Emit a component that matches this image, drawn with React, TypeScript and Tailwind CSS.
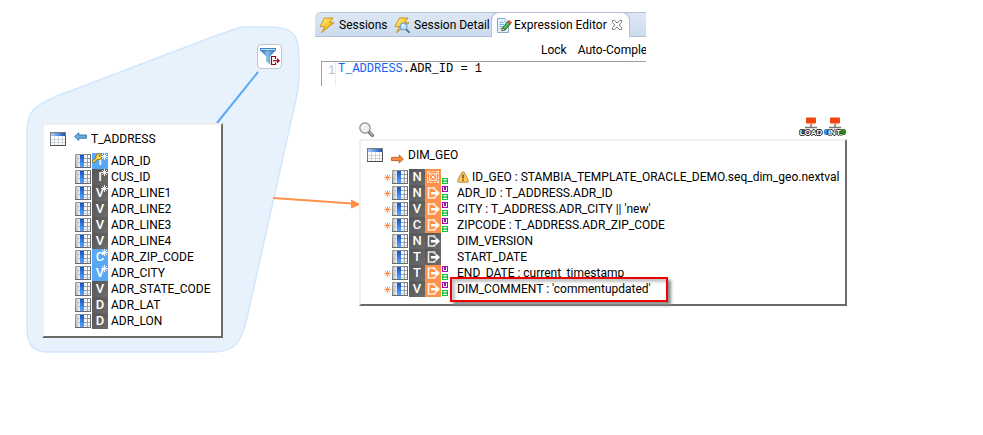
import type { ReactNode } from "react";
import { clsx } from "clsx";

type SourceColumn = {
  name: string;
  type: string;
  notNull?: boolean;
  primaryKey?: boolean;
  used?: boolean;
};

type TargetColumn = {
  label: string;
  type: string;
  mapped?: boolean;
  sequence?: boolean;
  warning?: boolean;
  marks?: string[];
  highlighted?: boolean;
};

const sourceColumns: SourceColumn[] = [
  { name: "ADR_ID", type: "I", notNull: true, primaryKey: true, used: true },
  { name: "CUS_ID", type: "I", notNull: true },
  { name: "ADR_LINE1", type: "V", notNull: true },
  { name: "ADR_LINE2", type: "V" },
  { name: "ADR_LINE3", type: "V" },
  { name: "ADR_LINE4", type: "V" },
  { name: "ADR_ZIP_CODE", type: "C", notNull: true, used: true },
  { name: "ADR_CITY", type: "V", notNull: true, used: true },
  { name: "ADR_STATE_CODE", type: "V" },
  { name: "ADR_LAT", type: "D" },
  { name: "ADR_LON", type: "D" },
];

const targetColumns: TargetColumn[] = [
  {
    label: "ID_GEO : STAMBIA_TEMPLATE_ORACLE_DEMO.seq_dim_geo.nextval",
    type: "N",
    mapped: true,
    sequence: true,
    warning: true,
    marks: ["I"],
  },
  { label: "ADR_ID : T_ADDRESS.ADR_ID", type: "N", mapped: true, marks: ["U", "I"] },
  { label: "CITY : T_ADDRESS.ADR_CITY || 'new'", type: "V", mapped: true, marks: ["U", "I"] },
  { label: "ZIPCODE : T_ADDRESS.ADR_ZIP_CODE", type: "C", mapped: true, marks: ["U", "I"] },
  { label: "DIM_VERSION", type: "N" },
  { label: "START_DATE", type: "T" },
  { label: "END_DATE : current_timestamp", type: "T", mapped: true, marks: ["U", "I"] },
  {
    label: "DIM_COMMENT : 'commentupdated'",
    type: "V",
    mapped: true,
    marks: ["U", "I"],
    highlighted: true,
  },
];

const card =
  "border-2 border-t-[#efefef] border-l-[#efefef] border-r-[#6b6b6b] border-b-[#6b6b6b] bg-white";

function BoltIcon({ magnifier }: { magnifier?: boolean }) {
  return (
    <svg width="16" height="16" viewBox="0 0 16 16" className="shrink-0">
      <defs>
        <linearGradient id="bolt" x1="0" y1="0" x2="1" y2="1">
          <stop offset="0" stopColor="#fff3a0" />
          <stop offset="0.5" stopColor="#fccb2e" />
          <stop offset="1" stopColor="#e08a00" />
        </linearGradient>
      </defs>
      <path
        d="M5.4 1 L14 1 L10.6 5.6 L15 5.8 L2.6 15.6 L5.8 9.8 L1 9.6 Z"
        fill="url(#bolt)"
        stroke="#c98a12"
        strokeWidth="0.9"
        strokeLinejoin="round"
      />
      {magnifier && (
        <>
          <path d="M11.6 11.8 L15 15.2" stroke="#55779c" strokeWidth="2" strokeLinecap="round" />
          <circle cx="9.6" cy="9.4" r="3.3" fill="#bfe2fa" stroke="#7ba6cd" strokeWidth="1.2" />
          <path d="M8 9 Q8.4 7.6 9.8 7.5" fill="none" stroke="#fff" />
        </>
      )}
    </svg>
  );
}

function EditorIcon() {
  return (
    <svg width="16" height="16" viewBox="0 0 16 16" className="shrink-0">
      <path d="M1.5 1.5 H9 L12.5 5 V15.5 H1.5 Z" fill="#e9f2fc" stroke="#8aa9cf" />
      <path d="M9 1.5 V5 H12.5" fill="#fff" stroke="#8aa9cf" strokeWidth="0.8" />
      <path d="M3.5 5.5 H7.5 M3.5 7.5 H8 M3.5 9.5 H6.5 M3.5 11.5 H6" stroke="#74aee6" />
      <path d="M5.6 14 L6.6 10.6 L9.2 12.9 Z" fill="#f3d8a4" stroke="#222" strokeWidth="0.6" />
      <path d="M6.6 10.6 L11.8 4.6 L14.4 6.9 L9.2 12.9 Z" fill="#37a547" stroke="#17692a" strokeWidth="0.8" />
      <path d="M11.8 4.6 L13 3.2 L15.8 5.4 L14.4 6.9 Z" fill="#e9573f" stroke="#a03626" strokeWidth="0.5" />
      <path d="M8 11.2 L13 5.6" stroke="#8fdc8b" strokeWidth="0.9" />
    </svg>
  );
}

function CloseIcon() {
  return (
    <svg width="12" height="12" viewBox="0 0 12 12">
      <path
        d="M1.5 1.5 H3.5 L6 4 L8.5 1.5 H10.5 V3.5 L8.2 6 L10.5 8.5 V10.5 H8.5 L6 8 L3.5 10.5 H1.5 V8.5 L3.8 6 L1.5 3.5 Z"
        fill="#fff"
        stroke="#7b7b7b"
      />
    </svg>
  );
}

function TableIcon() {
  return (
    <svg width="16" height="14" viewBox="0 0 16 14" className="shrink-0">
      <defs>
        <linearGradient id="header" x1="0" y1="0" x2="1" y2="0">
          <stop offset="0" stopColor="#a9cdf7" />
          <stop offset="1" stopColor="#1554c4" />
        </linearGradient>
      </defs>
      <rect x="0.5" y="0.5" width="15" height="13" fill="#fcfcfc" stroke="#777b82" />
      <path d="M1 7.5 H15 M1 10.5 H15 M4.5 4 V13 M8.5 4 V13 M12.5 4 V13" stroke="#cfd2d6" />
      <rect x="1" y="1" width="14" height="3" fill="url(#header)" />
      <path d="M0 13.5 H16 M15.5 4 V14" stroke="#4f5256" />
    </svg>
  );
}

function ColumnIcon() {
  return (
    <svg width="16" height="14" viewBox="0 0 16 14" className="shrink-0">
      <defs>
        <linearGradient id="frame" x1="0" y1="0" x2="1" y2="1">
          <stop offset="0" stopColor="#a2a2a2" />
          <stop offset="1" stopColor="#4d4d4d" />
        </linearGradient>
        <linearGradient id="cell" x1="0" y1="0" x2="1" y2="0">
          <stop offset="0" stopColor="#b9bcc1" />
          <stop offset="0.3" stopColor="#f0f0f0" />
          <stop offset="1" stopColor="#ffffff" />
        </linearGradient>
        <linearGradient id="fill" x1="0" y1="0" x2="0" y2="1">
          <stop offset="0" stopColor="#1353c4" />
          <stop offset="1" stopColor="#58a6ff" />
        </linearGradient>
      </defs>
      <rect x="0.5" y="0.5" width="15" height="13" fill="url(#cell)" stroke="url(#frame)" />
      <path d="M9 4.5 H15 M9 8.5 H15 M12.5 1 V13" stroke="#9a9da1" />
      <path d="M1 4.5 H5 M1 8.5 H5 M9 11.5 H15" stroke="#c4c7cb" />
      <rect x="5" y="1" width="4" height="12" fill="url(#fill)" />
      <path d="M0 13.5 H16 M15.5 1 V14" stroke="#66686b" />
    </svg>
  );
}

function StarMark({ className, color }: { className?: string; color: string }) {
  return (
    <svg width="7" height="7" viewBox="0 0 7 7" className={className}>
      <path d="M3.5 0 V7 M0 3.5 H7 M1 1 L6 6 M6 1 L1 6" stroke={color} strokeWidth="0.9" />
    </svg>
  );
}

function KeyIcon() {
  return (
    <svg width="11" height="10" viewBox="0 0 11 10" className="absolute top-0 left-0">
      <path d="M5.5 5 L1.4 8.6" stroke="#8d6a00" strokeWidth="2.8" strokeLinecap="round" />
      <circle cx="7" cy="3.6" r="3" fill="#ffe05a" stroke="#8d6a00" strokeWidth="0.9" />
      <path d="M5.5 5 L1.5 8.5" stroke="#ffe05a" strokeWidth="1.5" strokeLinecap="round" />
      <circle cx="7.7" cy="3" r="1" fill="#8d6a00" />
    </svg>
  );
}

function TypeTile({ type, blue, children }: { type: string; blue?: boolean; children?: ReactNode }) {
  return (
    <span
      className={clsx(
        "relative flex size-4 shrink-0 items-center justify-center text-[13px] leading-4 font-medium text-white",
        blue ? "bg-[#58a8f5]" : "bg-linear-to-br from-[#555555] to-[#6c6c6c]"
      )}
    >
      {type}
      {children}
    </span>
  );
}

function ExportIcon({ className }: { className: string }) {
  return (
    <svg width="16" height="16" viewBox="0 0 16 16" className={className}>
      <path
        d="M9.5 5 V3 H3.5 V13 H9.5 V11.5"
        fill="none"
        stroke="#fff"
        strokeWidth="1.7"
        strokeOpacity="0.85"
      />
      <path d="M6 7 H10.5 V4 L15 8.2 L10.5 12.4 V9.4 H6 Z" fill="#fff" />
    </svg>
  );
}

function SequenceIcon() {
  return (
    <svg width="16" height="16" viewBox="0 0 16 16" className="shrink-0 bg-[#ff9149]">
      <g fill="none" stroke="#fff" strokeWidth="0.7">
        <rect x="2.5" y="2.5" width="11" height="11" strokeDasharray="3 1" />
        <rect x="4.7" y="4.7" width="6.6" height="6.6" />
        <path d="M2 2 L14 14 M14 2 L2 14" />
      </g>
      <rect x="7" y="7" width="2" height="2" fill="#fff" />
    </svg>
  );
}

function UsageMark({ kind }: { kind: string }) {
  return (
    <svg width="6" height="6" viewBox="0 0 6 6">
      <rect width="6" height="6" fill={kind === "U" ? "#a20fae" : "#0cc53b"} />
      {kind === "U" ? (
        <path d="M1.5 1 V4.5 H4.5 V1" fill="none" stroke="#fff" />
      ) : (
        <path d="M1 1.5 H5 M1 4.5 H5 M3 1 V5" stroke="#fff" strokeWidth="0.9" />
      )}
    </svg>
  );
}

function WarningIcon() {
  return (
    <svg width="12" height="12" viewBox="0 0 12 12" className="shrink-0">
      <path
        d="M6 .8 Q7 .8 7.6 2 L11.2 9.2 Q11.8 11.2 10 11.3 H2 Q.2 11.2 .8 9.2 L4.4 2 Q5 .8 6 .8 Z"
        fill="#ffc858"
        stroke="#b5803a"
        strokeWidth="0.9"
      />
      <path d="M6 3.6 V7.4 M6 8.6 V10" stroke="#5c3b05" strokeWidth="1.3" />
    </svg>
  );
}

function BlockArrow({ left }: { left?: boolean }) {
  return (
    <svg width="13" height="10" viewBox="0 0 13 10" className="shrink-0">
      {left ? (
        <path
          d="M.6 4.6 L4.8 .8 V3 H12.4 V6.2 H4.8 V8.4 Z"
          fill="#6bb0e2"
          stroke="#2e6da4"
          strokeWidth="0.9"
        />
      ) : (
        <path
          d="M12.4 5 L8.2 1 V3.4 H.6 V6.6 H8.2 V9 Z"
          fill="#ff8b3d"
          stroke="#b85a1c"
          strokeWidth="0.9"
        />
      )}
    </svg>
  );
}

function SearchIcon() {
  return (
    <svg width="16" height="16" viewBox="0 0 16 16">
      <path d="M10 10 L13.4 13.4" stroke="#6d6d6d" strokeWidth="3.4" strokeLinecap="round" />
      <path d="M10.6 10.2 L13.4 13" stroke="#b5b5b5" strokeWidth="1.6" strokeLinecap="round" />
      <circle cx="6" cy="6" r="5.2" fill="#ededed" stroke="#8a8a8a" strokeWidth="1.2" />
      <path d="M3 5.6 Q3.6 3 6.4 2.8" fill="none" stroke="#fff" strokeWidth="1.2" />
    </svg>
  );
}

function FilterIcon() {
  return (
    <svg width="20" height="18" viewBox="0 0 20 18">
      <defs>
        <linearGradient id="funnel" x1="0" y1="0" x2="1" y2="0">
          <stop offset="0" stopColor="#1f62a6" />
          <stop offset="0.45" stopColor="#86c0ee" />
          <stop offset="1" stopColor="#2468ad" />
        </linearGradient>
      </defs>
      <path d="M.5 .5 H15.5 V2.4 L10 8.5 V16.5 L6.2 13.2 V8.5 L.5 2.4 Z" fill="url(#funnel)" />
      <rect x="0.5" y="0.5" width="15" height="1.8" fill="#e8f4ff" stroke="#2b7cc4" strokeWidth="0.9" />
      <rect x="11" y="8" width="9" height="10" fill="#fff" />
      <path d="M15.5 11 V8.5 H11.5 V16.5 H15.5 V14.5" fill="none" stroke="#a3000f" strokeWidth="1.2" />
      <path d="M13 12.7 H18" stroke="#a3000f" strokeWidth="1.2" />
      <path d="M17 10 L20 12.7 L17 15.4 Z" fill="#a3000f" />
    </svg>
  );
}

function TemplateBadge({ label, integration }: { label: string; integration?: boolean }) {
  return (
    <button type="button" className="relative flex h-5 w-6 justify-center">
      <svg width="24" height="20" viewBox="0 0 24 20">
        <path d="M12 6 V10 M6 10.5 H18" stroke="#777" strokeWidth="1.6" />
        <rect x="7" y="0.5" width="10" height="6" rx="1" fill="#f2460f" />
        <path d="M8 7 H16" stroke="#ffb49a" strokeWidth="0.8" />
        <rect x="1" y="12" width="6" height="6" rx="2" fill={integration ? "#3d86d6" : "#555"} />
        <rect x="17" y="12" width="6" height="6" rx="2" fill={integration ? "#2f8a1f" : "#555"} />
      </svg>
      <span className="absolute inset-x-0 bottom-0 text-center font-['Liberation_Sans',sans-serif] text-[8px] leading-[9px] font-bold text-white text-shadow-[1px_0_0_#222,-1px_0_0_#222,0_1px_0_#222,0_-1px_0_#222]">
        {label}
      </span>
    </button>
  );
}

function EditorPanel() {
  return (
    <section className="absolute top-3 left-[315px] w-[331px] overflow-hidden bg-white">
      <div className="flex h-[25px] rounded-tl-md border-y border-[#b4bfd8] bg-linear-to-b from-[#dde7f3] to-[#cbdcee]">
        <button type="button" className="flex w-[75px] items-center gap-1 pl-1">
          <BoltIcon />
          Sessions
        </button>
        <button type="button" className="flex w-[101px] items-center gap-1 pl-1 whitespace-nowrap">
          <BoltIcon magnifier />
          Session Detail
        </button>
        <div className="-my-px flex w-[139px] items-center rounded-t-lg border-x border-t border-[#b4bfd8] bg-white px-1 whitespace-nowrap">
          <button type="button" className="flex items-center gap-[2px]">
            <EditorIcon />
            Expression Editor
          </button>
          <button type="button" aria-label="Close" className="mr-[2px] ml-auto">
            <CloseIcon />
          </button>
        </div>
      </div>
      <div className="flex h-6 items-center gap-[11px] pt-[2px] pl-[226px] whitespace-nowrap">
        <button type="button">Lock</button>
        <button type="button">Auto-Complete</button>
      </div>
      <div className="ml-[6px] flex h-[25px] border-t border-l border-[#9f9f9f] font-['Liberation_Mono',monospace] text-xs leading-4">
        <span className="w-[14px] border-r border-[#ececec] pt-px pl-[6px] text-[#bdbdbd]">1</span>
        <code className="pl-[2px] font-['Liberation_Mono',monospace] text-xs leading-[15px]">
          <span className="text-[#1464f4]">T_ADDRESS</span>.ADR_ID = 1
        </code>
      </div>
    </section>
  );
}

function SourceNode() {
  return (
    <section className={clsx(card, "absolute top-[123px] left-[42px] w-[181px] pt-1 pb-[7px]")}>
      <h2 className="flex h-5 items-center pl-[6px]">
        <TableIcon />
        <span className="mr-1 ml-2 -mt-1">
          <BlockArrow left />
        </span>
        T_ADDRESS
      </h2>
      <ul className="mt-1 pl-[31px]">
        {sourceColumns.map((c) => (
          <li key={c.name} className="flex h-4 items-center">
            <ColumnIcon />
            <span className="ml-px">
              <TypeTile type={c.type} blue={c.used}>
                {c.primaryKey && <KeyIcon />}
                {c.notNull && <StarMark className="absolute top-0 right-0" color="#fff" />}
              </TypeTile>
            </span>
            <span className="ml-[3px]">{c.name}</span>
          </li>
        ))}
      </ul>
    </section>
  );
}

function TargetNode() {
  return (
    <section className={clsx(card, "absolute top-[139px] left-[359px] w-[488px] pt-1 pb-[7px]")}>
      <h2 className="flex h-5 items-center pl-[6px]">
        <TableIcon />
        <span className="mt-2 mr-1 ml-2">
          <BlockArrow />
        </span>
        DIM_GEO
      </h2>
      <ul className="mt-1 pl-[23px]">
        {targetColumns.map((c) => (
          <li key={c.label} className="flex h-4 items-center whitespace-nowrap">
            <span className="w-2">{c.mapped && <StarMark className="mt-px" color="#f5954f" />}</span>
            <ColumnIcon />
            <span className="ml-px">
              <TypeTile type={c.type} />
            </span>
            {c.sequence ? (
              <SequenceIcon />
            ) : (
              <ExportIcon
                className={
                  c.mapped ? "shrink-0 bg-[#ff9149]" : "shrink-0 bg-linear-to-br from-[#555555] to-[#6c6c6c]"
                }
              />
            )}
            <span className="ml-px flex h-4 w-[15px] shrink-0 flex-col justify-end gap-[2px] pb-px">
              {c.marks?.map((m) => <UsageMark key={m} kind={m} />)}
            </span>
            <span className="relative flex items-center gap-[3px]">
              {c.warning && <WarningIcon />}
              {c.label}
              {c.highlighted && (
                <span className="absolute -top-1 -left-[7px] h-[25px] w-[218px] border-2 border-[#f00000] shadow-[3px_3px_3px_#8c8c8c,inset_3px_3px_3px_#c4c4c4]" />
              )}
            </span>
          </li>
        ))}
      </ul>
    </section>
  );
}

export default function App() {
  return (
    <main className="relative min-h-screen overflow-hidden bg-white font-[Roboto,sans-serif] text-xs leading-4 text-black">
      <svg className="absolute top-0 left-0" width="983" height="435" viewBox="0 0 983 435">
        <path
          d="M27 130 C28 112 32 107 57 96 L215 36 L235 29 Q244 26 252 27 H275 C296 29 299 38 299 60 V80 Q297 98 294 108 L247 318 C241 342 236 351 215 352 H45 C30 351 27 341 27 326 Z"
          fill="#e8f2fd"
          stroke="#d3e7fc"
          strokeWidth="1.5"
        />
        <path d="M217 123 L258 72" stroke="#58a8f5" strokeWidth="2" />
        <path d="M273 198 L352 203.5" stroke="#ff9149" strokeWidth="2" />
        <path d="M351 199.5 L361 204.5 L351 208.5 Z" fill="#ff9149" />
      </svg>
      <EditorPanel />
      <button
        type="button"
        aria-label="Filter"
        className="absolute top-11 left-[257px] flex size-[25px] items-center justify-center rounded border border-[#c4c4c4] bg-white"
      >
        <FilterIcon />
      </button>
      <button type="button" aria-label="Search" className="absolute top-[122px] left-[359px]">
        <SearchIcon />
      </button>
      <div className="absolute top-[117px] left-[799px] flex">
        <TemplateBadge label="LOAD" />
        <TemplateBadge label="INT." integration />
      </div>
      <SourceNode />
      <TargetNode />
    </main>
  );
}
